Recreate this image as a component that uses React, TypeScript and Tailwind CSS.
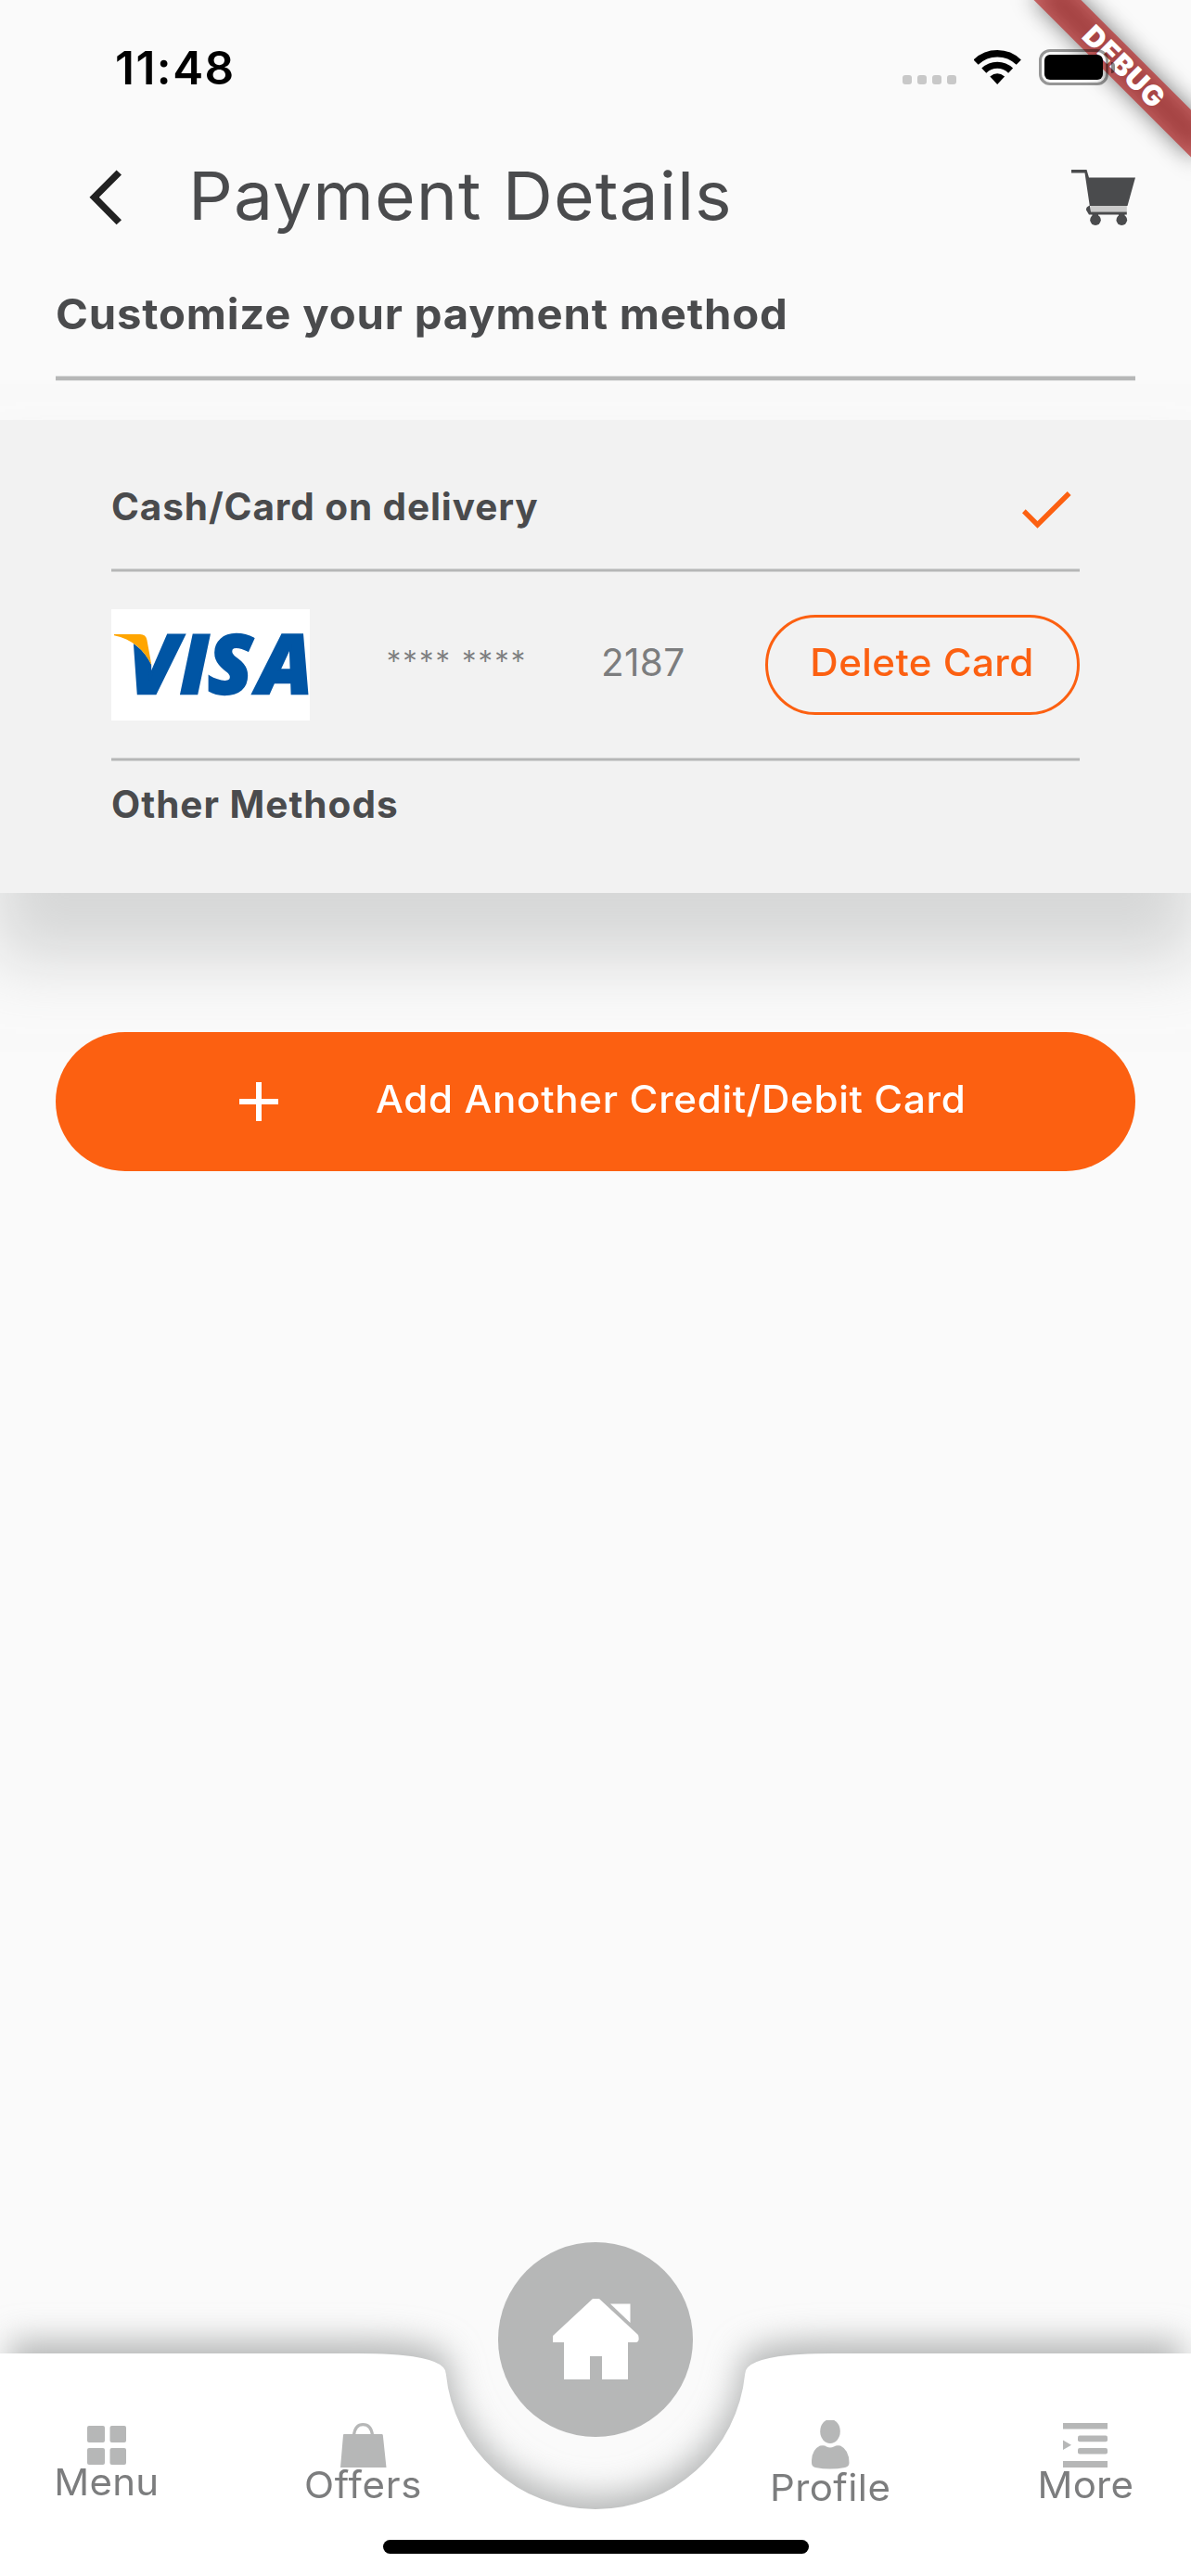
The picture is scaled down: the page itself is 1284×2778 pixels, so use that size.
import type { ReactNode } from "react";

const GREY = "#b6b7b7";

function StatusBar() {
  return (
    <div className="flex h-[146px] items-center pl-[124px] pr-[82px]">
      <span className="mt-[2px] text-[49.5px] leading-none font-semibold tracking-[1.5px] text-black">11:48</span>
      <div className="ml-auto mt-[26px] flex gap-[6px]">
        <i className="size-[10px] rounded-[3px] bg-[#c8c8c8]" />
        <i className="size-[10px] rounded-[3px] bg-[#c8c8c8]" />
        <i className="size-[10px] rounded-[3px] bg-[#c8c8c8]" />
        <i className="size-[10px] rounded-[3px] bg-[#c8c8c8]" />
      </div>
      <svg className="ml-[19px] h-[38px] w-[51px]" viewBox="0 0 51 38" fill="none">
        <path d="M2.1 13.1A33.2 33.2 0 0 1 48.3 13.1" stroke="#000" strokeWidth="7.4" />
        <path d="M10.8 22.1A20.7 20.7 0 0 1 39.6 22.1" stroke="#000" strokeWidth="7.2" />
        <path d="M17.3 28.6Q25.2 22 33.1 28.6L25.2 37Z" fill="#000" />
      </svg>
      <div className="relative z-20 mb-[1px] ml-[19px] flex items-center">
        <div className="h-[39px] w-[75px] rounded-[12px] border-[3px] border-black/40 p-[3px]">
          <div className="h-full rounded-[6px] bg-black" />
        </div>
        <div className="ml-[3px] h-[12px] w-[4px] rounded-r-full bg-black/45" />
      </div>
    </div>
  );
}

function DebugBanner() {
  return (
    <div className="pointer-events-none absolute top-0 right-0 z-10 size-[320px] overflow-hidden">
      <div className="absolute top-[54px] left-[128px] h-[36px] w-[240px] rotate-45 bg-black/50 blur-[12px]" />
      <div className="absolute top-[54px] left-[98px] flex h-[36px] w-[300px] rotate-45 items-center justify-center bg-[#b71c1c]/63">
        <span className="text-[30.6px] leading-none font-black tracking-[0.9px] text-white">DEBUG</span>
      </div>
    </div>
  );
}

function CartIcon() {
  return (
    <svg className="h-[60px] w-[69px]" viewBox="0 0 69 60" fill="#4a4b4d">
      <path d="M0 0H16.5L19 8.5H69L68 12L60.5 39H19.8L14.5 3.6H0Z" />
      <rect x="21" y="39" width="38.8" height="6.5" fill="#cacaca" />
      <path d="M20 38.5Q15.5 40 16 43.5L19 48.5H59.8V45.6H21Z" />
      <circle cx="26" cy="54.2" r="5.8" />
      <circle cx="54.3" cy="54.2" r="5.8" />
      <rect x="22.5" y="48" width="6.5" height="3" />
      <rect x="51" y="48" width="6.5" height="3" />
    </svg>
  );
}

function VisaLogo() {
  return (
    <svg className="h-[120px] w-[214px] overflow-visible bg-white" viewBox="0 0 214 120">
      <g
        fill="#0055a4"
        stroke="#0055a4"
        strokeWidth="2.4"
        fontFamily="Open Sans, sans-serif"
        fontSize="88"
        fontWeight="800"
        fontStyle="italic"
      >
        <text x="18" y="91.2">V</text>
        <text x="74" y="91.2">I</text>
        <text x="104" y="91.2">S</text>
        <text x="157.5" y="91.2">A</text>
      </g>
      <path d="M0 20H45V60L43.5 60.5C36 44 22 32 3 28.5Z" fill="#fff" />
      <path d="M3 27H31Q37.3 27 38.4 33L43.4 60.5C36 44 22 32 3 28.3Z" fill="#ffa500" />
    </svg>
  );
}

function Rule() {
  return <div className="h-[4px] border-y border-[#d3d4d4] bg-[#b6b7b7]" />;
}

function NavItem({ label, icon, className }: { label: string; icon: ReactNode; className: string }) {
  return (
    <div className="flex w-[160px] flex-col items-center">
      {icon}
      <span
        className={`relative top-[1px] scale-x-105 text-[40px] leading-[36px] font-normal text-[#7c7d7e] ${className}`}
      >
        {label}
      </span>
    </div>
  );
}

const NAV_SHAPE =
  "M0 120H385Q480.8 120 480.8 142A162 162 0 0 0 803.2 142Q803.2 120 899 120H1284V360H0Z";

function BottomNav() {
  return (
    <nav className="relative mt-auto h-[360px]">
      <svg className="absolute inset-0 h-[360px] w-[1284px] overflow-visible" viewBox="0 0 1284 360">
        <defs>
          <filter id="soft" x="-10%" y="-40%" width="120%" height="180%">
            <feGaussianBlur stdDeviation="17" />
          </filter>
        </defs>
        <path
          d="M14 110H385Q480.8 110 480.8 132A162 162 0 0 0 803.2 132Q803.2 110 899 110H1270V360H14Z"
          fill={GREY}
          stroke={GREY}
          strokeWidth="8"
          filter="url(#soft)"
        />
        <path d={NAV_SHAPE} fill="#fff" />
      </svg>
      <button className="absolute top-0 left-[537px] flex size-[210px] justify-center rounded-full bg-[#b6b7b7] pt-[61px]">
        <svg className="h-[87px] w-[93px]" viewBox="0 0 93 87" fill="#fff">
          <path d="M43 0H50L92 39Q94 46 90 47H81V87H53V62H40V87H12V47H0V40Z" />
          <path d="M62 5.5H83.5V26Z" />
        </svg>
      </button>
      <div className="relative pt-[120px]">
        <div className="flex h-[234px] items-center justify-between pr-[34px] pl-[35px]">
          <div className="flex items-center gap-[117px]">
            <NavItem
              label="Menu"
              className="tracking-[0.2px]"
              icon={
                <svg className="h-[42px] w-[42px]" viewBox="0 0 42 42" fill={GREY}>
                  <rect width="19" height="18" rx="2" />
                  <rect x="24.5" width="17.5" height="18" rx="2" />
                  <rect y="24" width="19" height="18" rx="2" />
                  <rect x="24.5" y="24" width="17.5" height="18" rx="2" />
                </svg>
              }
            />
            <NavItem
              label="Offers"
              className="tracking-[0.7px]"
              icon={
                <svg className="h-[48px] w-[50px]" viewBox="0 0 50 48" fill={GREY}>
                  <path d="M3 13Q3 12 4 12H44.5Q45.6 12 45.8 13L49.5 48H0Z" />
                  <path d="M14.5 13C15.5 5 19 1.6 24.3 1.6S33.5 5 34.5 13" fill="none" stroke={GREY} strokeWidth="3.2" />
                </svg>
              }
            />
          </div>
          <div className="flex items-center gap-[115px]">
            <NavItem
              label="Profile"
              className="tracking-[0.4px]"
              icon={
                <svg className="h-[54px] w-[41px]" viewBox="0 0 41 54" fill={GREY}>
                  <ellipse cx="20" cy="12" rx="10.8" ry="13" />
                  <path d="M9 27.5Q14 26.5 16 28.5Q20 30.5 24 28.5Q27 26.5 31 27.5Q40.5 32 40.5 46Q40.5 50 36 51Q20 54 4 51Q0 50 0 46Q-.5 32 9 27.5Z" />
                </svg>
              }
            />
            <NavItem
              label="More"
              className="tracking-[0.2px]"
              icon={
                <svg className="h-[48px] w-[48px]" viewBox="0 0 48 48" fill={GREY}>
                  <rect width="48" height="6.5" />
                  <rect x="16" y="13.5" width="32" height="6.8" rx="2" />
                  <rect x="16" y="27" width="32" height="6.5" rx="2" />
                  <rect y="41" width="48" height="7" />
                  <path d="M0 18.5L9 23.7L0 29Z" />
                </svg>
              }
            />
          </div>
        </div>
      </div>
      <div className="absolute bottom-[24px] left-[413px] h-[15px] w-[459px] rounded-full bg-black" />
    </nav>
  );
}

export default function App() {
  return (
    <div className="relative flex h-[2778px] w-[1284px] flex-col overflow-hidden bg-[#fafafa] font-['Inter',sans-serif] text-[#4a4b4d]">
      <DebugBanner />
      <StatusBar />

      <header className="flex h-[128px] items-center pr-[60px] pl-[96px]">
        <svg className="mt-[6px] h-[60px] w-[36px]" viewBox="0 0 36 60" fill="#212121">
          <path d="M29.6 .5L35 5.6L10.8 29.7L35 54.2L29.6 59.3L.5 29.7Z" />
        </svg>
        <h1 className="mt-[3px] ml-[71px] origin-left scale-x-105 text-[71.5px] leading-none font-normal tracking-[0.95px] whitespace-nowrap">
          Payment Details
        </h1>
        <div className="mt-[6px] ml-auto">
          <CartIcon />
        </div>
      </header>

      <div className="flex h-[128px] items-center pl-[60px]">
        <h2 className="origin-left scale-x-105 text-[45px] leading-none font-bold tracking-[0.78px] whitespace-nowrap">
          Customize your payment method
        </h2>
      </div>
      <div className="mx-[60px] mt-[3px] h-[6px] border-y border-[#e2e3e3] bg-[#b6b7b7]" />

      <section className="mt-[42px] h-[510px] bg-[#f2f2f2] px-[120px] pt-[27px] shadow-[0_66px_66px_6px_rgba(182,183,183,0.5)]">
        <div className="flex h-[133px] items-center justify-between pr-[9px]">
          <span className="mt-[2px] text-[40.5px] leading-none font-bold tracking-[0.9px]">Cash/Card on delivery</span>
          <svg className="mt-[6px] h-[40px] w-[53px]" viewBox="0 0 53 40" fill="#fc6011">
            <path d="M0 23.3L3.7 19.3L16.5 32L48.7 0L52.6 4L16.5 39.8Z" />
          </svg>
        </div>
        <Rule />
        <div className="flex h-[200px] items-center">
          <VisaLogo />
          <span className="ml-[82px] w-[232px] font-['Lato',sans-serif] text-[40px] leading-none tracking-[0.6px] text-[#7c7d7e]">
            **** ****
          </span>
          <span className="mb-[3px] text-[40.5px] leading-none font-normal tracking-[0.3px] text-[#7c7d7e]">2187</span>
          <button className="ml-auto flex h-[108px] w-[339px] items-center justify-center rounded-full border-[3px] border-[#fc6011] pb-[3px] text-[40.5px] leading-none font-medium text-[#fc6011]">
            <span className="scale-x-104 tracking-[0.4px] whitespace-nowrap">Delete Card</span>
          </button>
        </div>
        <Rule />
        <div className="flex h-[93px] items-center">
          <span className="mt-[2px] text-[40.5px] leading-none font-bold tracking-[1px]">Other Methods</span>
        </div>
      </section>

      <button className="mx-[60px] mt-[150px] flex h-[150px] items-center rounded-full bg-[#fc6011] pl-[198px] text-white">
        <svg className="size-[42px]" viewBox="0 0 42 42" fill="#fff">
          <path d="M18 0H24V18H42V24H24V42H18V24H0V18H18Z" />
        </svg>
        <span className="mb-[3px] ml-[105px] origin-left scale-x-104 text-[40.5px] leading-none font-medium tracking-[0.65px] whitespace-nowrap">
          Add Another Credit/Debit Card
        </span>
      </button>

      <BottomNav />
    </div>
  );
}
